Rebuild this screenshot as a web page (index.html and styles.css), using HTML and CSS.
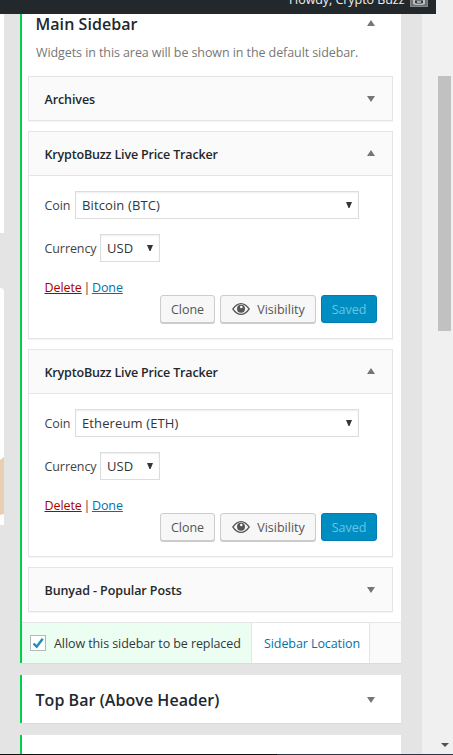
FILE: index.html
```html
<!DOCTYPE html>
<html lang="en">
<head>
<meta charset="utf-8">
<title>Widgets</title>
<link rel="stylesheet" href="styles.css">
</head>
<body>
<header class="topbar">
  <span class="howdy">Howdy, Crypto Buzz</span>
  <svg class="avatar" viewBox="0 0 18 18"><path fill="#85888b" d="M0 0h18v18H0z"/><path fill="#6c7072" d="M1 1h16v16H1z"/><path fill="#bcc0c0" d="M3 10h2v4l2 1h4l2-1v-4h2v5l-3 1H6l-3-1z"/><path fill="#34383b" d="M5 12h2v2H5zm6 0h2v2h-2z"/><path fill="#a4a8a9" d="M7 12h4v2H7z"/></svg>
</header>
<div class="page">
  <aside class="left">
    <div class="left-one"></div>
    <div class="left-two"><svg viewBox="0 0 4 58"><path fill="#e8cfb4" d="M0 3 4 0v57l-4 1z"/></svg></div>
  </aside>
  <main class="areas">
    <section class="area area-main">
      <div class="area-head"><h2>Main Sidebar</h2><svg class="arrow" viewBox="0 0 8 6"><path d="M0 6h8L4 0z"/></svg></div>
      <p class="desc">Widgets in this area will be shown in the default sidebar.</p>
      <div class="widgets">
        <article class="widget closed"><div class="widget-head"><h3>Archives</h3><svg class="arrow" viewBox="0 0 8 6"><path d="M0 0h8L4 6z"/></svg></div></article>
        <article class="widget open">
          <div class="widget-head"><h3 class="tracker">KryptoBuzz Live Price Tracker</h3><svg class="arrow up" viewBox="0 0 8 6"><path d="M0 6h8L4 0z"/></svg></div>
          <div class="widget-body">
            <div class="field"><label class="coin">Coin</label><div class="select wide"><span>Bitcoin (BTC)</span><svg viewBox="0 0 6 6"><path d="M0 0h6L3.500 6h-1z"/></svg></div></div>
            <div class="field"><label class="currency">Currency</label><div class="select"><span>USD</span><svg viewBox="0 0 6 6"><path d="M0 0h6L3.500 6h-1z"/></svg></div></div>
            <div class="links"><a class="delete">Delete</a><i>|</i><a class="done">Done</a></div>
            <div class="buttons"><span class="btn clone"><b>Clone</b></span><span class="btn vis"><svg viewBox="0 0 18 12"><path fill="#555" fill-rule="evenodd" d="M0 6Q4 0 9 0t9 6q-4 6-9 6T0 6zm1.700 0Q5 10.700 9 10.700T16.300 6Q13 1.300 9 1.300T1.700 6z"/><circle cx="9" cy="5.700" r="4" fill="#555"/><circle cx="9.300" cy="4" r="1.300" fill="#f7f7f7"/></svg><b>Visibility</b></span><span class="btn saved"><b>Saved</b></span></div>
          </div>
        </article>
        <article class="widget open">
          <div class="widget-head"><h3 class="tracker">KryptoBuzz Live Price Tracker</h3><svg class="arrow up" viewBox="0 0 8 6"><path d="M0 6h8L4 0z"/></svg></div>
          <div class="widget-body">
            <div class="field"><label class="coin">Coin</label><div class="select wide"><span>Ethereum (ETH)</span><svg viewBox="0 0 6 6"><path d="M0 0h6L3.500 6h-1z"/></svg></div></div>
            <div class="field"><label class="currency">Currency</label><div class="select"><span>USD</span><svg viewBox="0 0 6 6"><path d="M0 0h6L3.500 6h-1z"/></svg></div></div>
            <div class="links"><a class="delete">Delete</a><i>|</i><a class="done">Done</a></div>
            <div class="buttons"><span class="btn clone"><b>Clone</b></span><span class="btn vis"><svg viewBox="0 0 18 12"><path fill="#555" fill-rule="evenodd" d="M0 6Q4 0 9 0t9 6q-4 6-9 6T0 6zm1.700 0Q5 10.700 9 10.700T16.300 6Q13 1.300 9 1.300T1.700 6z"/><circle cx="9" cy="5.700" r="4" fill="#555"/><circle cx="9.300" cy="4" r="1.300" fill="#f7f7f7"/></svg><b>Visibility</b></span><span class="btn saved"><b>Saved</b></span></div>
          </div>
        </article>
        <article class="widget closed"><div class="widget-head"><h3>Bunyad - Popular Posts</h3><svg class="arrow" viewBox="0 0 8 6"><path d="M0 0h8L4 6z"/></svg></div></article>
      </div>
      <footer class="area-foot">
        <div class="allow"><span class="check"><svg viewBox="0 0 12 12"><path d="M1.500 6.500 4.700 9.700 10.700 1.700" fill="none" stroke="#1e8cbe" stroke-width="2.400"/></svg></span><span class="foot-text">Allow this sidebar to be replaced</span></div>
        <a class="location"><span class="foot-text">Sidebar Location</span></a>
      </footer>
    </section>
    <section class="area area-top"><div class="area-head"><h2>Top Bar (Above Header)</h2><svg class="arrow" viewBox="0 0 8 6"><path d="M0 0h8L4 6z"/></svg></div></section>
    <section class="area area-next"><h2>Header Sidebar</h2></section>
  </main>
  <div class="scroll"><div class="thumb"></div><svg viewBox="0 0 8 4"><path d="M0 0h8L4 4z"/></svg></div>
</div>
<div class="edge"></div>
</body>
</html>
```
FILE: styles.css
```css
* { box-sizing: border-box; }
body { margin: 0; width: 453px; height: 755px; overflow: hidden; background: #f0f0f0; font: 12.5px/18px "Open Sans", "Noto Sans", sans-serif; letter-spacing: -.085px; color: #444; white-space: nowrap; }
h2, h3, p { margin: 0; }
svg { display: block; flex: none; }
b { font-weight: 400; }
i { font-style: normal; }
.topbar { width: 436px; height: 14px; background: #23282d; color: #eee; display: flex; overflow: hidden; padding-left: 289px; align-items: flex-end; }
.howdy { width: 121px; line-height: 18px; margin-bottom: 5px; letter-spacing: -.05px; }
.avatar { width: 18px; height: 18px; margin-bottom: 7px; }
.page { display: flex; width: 453px; height: 740px; background: #e4e4e4; }
.left { width: 4px; margin-right: 16px; }
.left-one { height: 219px; background: #fff; }
.left-two { height: 237px; margin-top: 55px; padding-top: 169px; background: #fdfefd; border-top-right-radius: 4px; }
.left-two svg { width: 4px; height: 58px; }
.areas { width: 381px; height: 740px; overflow: hidden; }
.area { background: #fff; border-left: 2px solid #00d04b; box-shadow: 0 1px 1px rgba(0,0,0,.04); margin-bottom: 12px; }
.area-main { height: 649px; }
.area-head { display: flex; align-items: center; justify-content: space-between; padding: 0 26px 0 13.5px; }
.area-main .area-head { height: 20px; }
.area-main .area-head .arrow { margin-top: -2px; }
.area-top .area-head { height: 48px; }
.area-top h2 { padding-top: 2px; }
.area-top .arrow { margin-top: 2px; }
h2 { color: #23282d; font-size: 16px; line-height: 22px; font-weight: 600; letter-spacing: .05px; }
.arrow { width: 8px; height: 6px; fill: #72777c; }
.up { margin-top: -2px; }
.desc { color: #777; padding-left: 14px; margin-top: 10px; height: 32px; line-height: 18px; }
.widgets { padding: 0 8px 0 6px; display: flex; flex-direction: column; gap: 10px; height: 546px; }
.widget { border: 1px solid #e5e5e5; box-shadow: 0 1px 1px rgba(0,0,0,.04); background: #fff; }
.closed { height: 45px; }
.open { height: 208px; }
.widget-head { height: 43px; background: #fafafa; display: flex; align-items: center; justify-content: space-between; padding: 0 17px 0 15.5px; }
.open .widget-head { height: 44px; border-bottom: 1px solid #e5e5e5; }
h3 { font-size: 12.5px; font-weight: 600; color: #23282d; line-height: 18px; padding-top: 2px; }
.tracker { letter-spacing: -.17px; }
.widget-body { padding: 15px 15px 0 15.5px; }
.field { display: flex; height: 28px; margin-bottom: 15px; align-items: center; }
.field label { padding-top: 2px; }
.coin { width: 30.5px; }
.currency { width: 55.5px; }
.select { width: 60px; height: 28px; border: 1px solid #ddd; box-shadow: inset 0 1px 2px rgba(0,0,0,.07); color: #32373c; display: flex; align-items: center; justify-content: space-between; padding: 0 6px; font-size: 13px; letter-spacing: .12px; }
.wide { width: 284px; }
.select svg { width: 6px; height: 6px; fill: #32373c; }
.links { display: flex; gap: 1.7px; height: 18px; margin-top: 17px; }
.links a { text-decoration: underline; }
.delete { color: #a00; }
.done { color: #0073aa; }
.buttons { display: flex; justify-content: flex-end; gap: 5px; margin-top: -2px; }
.btn { height: 28px; border: 1px solid #ccc; border-radius: 3px; background: #f7f7f7; box-shadow: 0 1px 0 #ccc; color: #555; display: flex; align-items: center; justify-content: center; letter-spacing: 0; }
.btn b { padding-top: 1px; }
.clone { width: 55px; }
.vis { width: 96px; gap: 7px; padding-left: 1px; }
.vis svg { width: 18px; height: 12px; }
.saved { width: 56px; background: #008ec2; border-color: #007cb2; box-shadow: none; color: #66c6e4; }
.area-foot { display: flex; height: 41px; border-top: 1px solid #e5e5e5; background: #fafafa; }
.foot-text { padding-top: 2px; }
.allow { width: 229px; background: #ecfef2; display: flex; align-items: center; padding-left: 8px; gap: 8px; color: #32373c; }
.check { width: 16px; height: 16px; border: 1px solid #b4b9be; background: #fff; padding: 1px; }
.check svg { width: 12px; height: 12px; }
.location { width: 119px; border: solid #e5e5e5; border-width: 0 1px; background: #fff; color: #0073aa; display: flex; align-items: center; padding-left: 12px; }
.area-next { height: 19px; padding: 15px 0 0 14px; overflow: hidden; margin: 0; }
.area-next h2 { letter-spacing: -.3px; }
.scroll { width: 31px; margin-left: 21px; background: #f0f0f0; height: 740px; padding: 62px 0 0 16px; display: flex; flex-direction: column; justify-content: space-between; }
.thumb { width: 13px; height: 255px; background: #c1c1c1; }
.scroll svg { width: 8px; height: 4px; fill: #505050; margin: 0 0 7px 2.5px; }
.edge { height: 1px; background: linear-gradient(90deg, #101010 277px, #2b3440 277px); }
```
